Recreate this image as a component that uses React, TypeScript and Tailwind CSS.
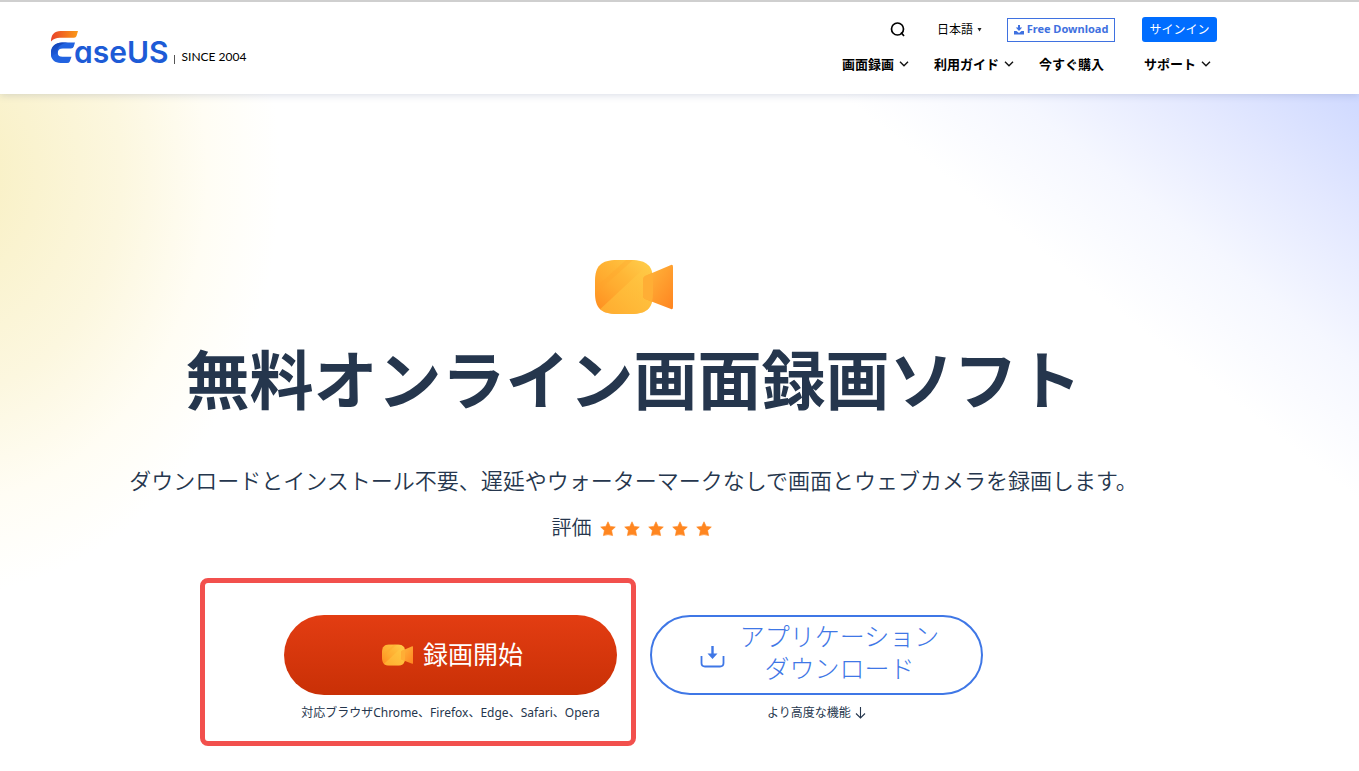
import React from "react";

const navItems = [
  { label: "画面録画", menu: true, width: "w-[92px]" },
  { label: "利用ガイド", menu: true, width: "w-[105px]" },
  { label: "今すぐ購入", menu: false, width: "w-[105px]" },
  { label: "サポート", menu: true, width: "w-[73px]" },
];

function Logo() {
  return (
    <a href="#" aria-label="EaseUS" className="flex items-end text-[#1d5bd6]">
      <svg width="27" height="34" viewBox="0 0 27 34" className="shrink-0" aria-hidden="true">
        <defs>
          <linearGradient id="logoTop" x1="0" y1="0" x2="1" y2="0">
            <stop offset="0" stopColor="#e8432b" />
            <stop offset="1" stopColor="#fb9a17" />
          </linearGradient>
          <linearGradient id="logoBase" x1="0" y1="0" x2="0.4" y2="1">
            <stop offset="0" stopColor="#123fae" />
            <stop offset="1" stopColor="#2263e6" />
          </linearGradient>
        </defs>
        <path d="M0 11.500C0 4.500 3.500 1 9.500 1H27L25.500 6Q25 7.800 23 7.800H9C5 7.800 2.500 9 0 11.500Z" fill="url(#logoTop)" />
        <path d="M0 22.500C1 16 5 12.500 11 12.500H24L22.800 16.500Q22.200 18.600 20 18.600H12C8.500 18.600 6.800 20 6.800 23C6.800 25.800 8.500 26.800 11.500 26.800H20.500L18.800 31.500Q18.200 33 16 33H9.500C3 33-.500 29 0 22.500Z" fill="#2263e0" />
        <path d="M0 23C-.500 17 4 12.500 11 12.500H17C9 14 6 17 6.500 23.500C3 24 1 26 1 28Q0 26 0 23Z" fill="url(#logoBase)" />
      </svg>
      <span className="-ml-1 font-['Inter',sans-serif] text-[30px] leading-6 font-semibold [font-feature-settings:'cv11']">
        aseUS
      </span>
    </a>
  );
}

function Chevron() {
  return (
    <svg width="10" height="6" viewBox="0 0 10 6" fill="none" stroke="#111" strokeWidth="1.4" aria-hidden="true">
      <path d="M1 .8 5 4.800 9 .8" />
    </svg>
  );
}

function Camera({ id, className }: { id: string; className: string }) {
  return (
    <svg viewBox="0 0 78 54" className={className} aria-hidden="true">
      <defs>
        <linearGradient id={id + "body"} x1="0.1" y1="0.9" x2="0.9" y2="0.1">
          <stop offset="0" stopColor="#ff9222" />
          <stop offset="0.4" stopColor="#ffac30" />
          <stop offset="0.62" stopColor="#ffb636" />
          <stop offset="1" stopColor="#ffca48" />
        </linearGradient>
        <linearGradient id={id + "lens"} x1="0" y1="0" x2="1" y2="1">
          <stop offset="0" stopColor="#ffbb3e" />
          <stop offset="1" stopColor="#ff8420" />
        </linearGradient>
        <linearGradient id={id + "shade"} x1="0" y1="1" x2="1" y2="0">
          <stop offset="0" stopColor="#ffbd38" />
          <stop offset="1" stopColor="#ffca46" />
        </linearGradient>
        <clipPath id={id + "clip"}>
          <path d="M22 0H36C52 0 58 6 58 21V33C58 48 52 54 36 54H22C6 54 0 48 0 33V21C0 6 6 0 22 0Z" />
        </clipPath>
      </defs>
      <g clipPath={"url(#" + id + "clip)"}>
        <path d="M0 0H58V54H0Z" fill={"url(#" + id + "body)"} />
        <path d="M0 54 58 0V54Z" fill={"url(#" + id + "shade)"} fillOpacity="0.6" />
        <path d="M0 28 31 0H38L0 34Z" fill="#ffa22c" fillOpacity="0.3" />
      </g>
      <path d="M50 16Q48 17 48 20V36Q48 38 50 39L76 49Q78 50 78 47V7Q78 4 76 5Z" fill={"url(#" + id + "lens)"} />
      <path d="M50 16Q48 17 48 20V36Q48 38 50 39L57 41.500Q58 38 58 33V21Q58 16 57 13Z" fill="#ffae35" />
    </svg>
  );
}

function Star() {
  return (
    <svg width="16" height="16" viewBox="0 0 16 16" aria-hidden="true">
      <path
        d="M8 .8 10.200 5.400 15.300 6 11.600 9.500 12.600 14.600Q8 12.600 3.400 14.600L4.400 9.500.7 6 5.800 5.400Z"
        fill="#ff8620"
        stroke="#ff8620"
        strokeWidth="0.6"
        strokeLinejoin="round"
      />
    </svg>
  );
}

export default function App() {
  return (
    <div className="min-h-screen bg-white font-['Noto_Sans','Noto_Sans_CJK_JP',sans-serif] text-[#25364d]">
      <header className="relative z-10 border-t-2 border-[#cfcfcf] bg-white shadow-[0_1px_8px_rgba(60,80,130,0.2)]">
        <div className="flex h-[92px] justify-between pr-[142px] pl-[51px]">
          <div className="flex items-end self-start pt-[28px]">
            <Logo />
            <span className="ml-[5px] h-[9px] w-px self-end bg-[#555]" />
            <span className="ml-[7px] font-['Lato',sans-serif] text-[12px] leading-[14px] text-black">SINCE 2004</span>
          </div>
          <div className="flex flex-col items-end pt-[15px]">
            <div className="flex items-center">
              <button type="button" aria-label="検索" className="mr-[31px]">
                <svg width="16" height="16" viewBox="0 0 16 16" fill="none" stroke="#000" strokeWidth="1.700" aria-hidden="true">
                  <circle cx="7.500" cy="7" r="6" />
                  <path d="m11 10.500 3 3.500" />
                </svg>
              </button>
              <button type="button" className="mr-[25px] flex items-center gap-1 text-[12px] leading-5 text-black">
                日本語
                <svg width="5" height="4" viewBox="0 0 5 4" aria-hidden="true">
                  <path d="M.5 0H4.500L2.500 3.500Z" fill="#222" />
                </svg>
              </button>
              <a href="#" className="mr-[27px] flex h-6 w-[108px] items-center justify-center gap-[3px] border border-[#3f71e0] text-[11px] font-bold text-[#3f71e0]">
                <svg width="10" height="10" viewBox="0 0 10 10" fill="#3f71e0" aria-hidden="true">
                  <path d="M4 0H6V2.500H8.200L5 6 1.800 2.500H4ZM0 6H2.500L5 8 7.500 6H10V9.500H0Z" />
                </svg>
                Free Download
              </a>
              <a href="#" className="flex h-[25px] w-[75px] items-center justify-center rounded-[3px] bg-[#006dff] text-[12px] leading-5 text-white">
                サインイン
              </a>
            </div>
            <nav className="mt-3 flex">
              {navItems.map((item) => (
                <a key={item.label} href="#" className={"flex shrink-0 items-center gap-[5px] text-[13px] leading-5 font-bold text-black " + item.width}>
                  {item.label}
                  {item.menu && <Chevron />}
                </a>
              ))}
            </nav>
          </div>
        </div>
      </header>

      <main className="bg-[radial-gradient(330px_420px_at_-50px_80px,#f9f1c8_14%,#fcf7df_52%,#fffdf4_78%,transparent_100%),linear-gradient(38deg,transparent_calc(100%-320px),#f5f7ff_calc(100%-215px),#e3e8ff_calc(100%-105px),#cfd9ff_100%)] bg-no-repeat pb-6">
        <div className="flex flex-col items-center pt-[166px] pr-[92px]">
          <Camera id="hero" className="h-[54px] w-[78px]" />
          <h1 className="mt-[18px] text-[64px] leading-[96px] font-bold whitespace-nowrap">無料オンライン画面録画ソフト</h1>
          <p className="mt-9 text-[22px] leading-8 font-[350] whitespace-nowrap">
            ダウンロードとインストール不要、遅延やウォーターマークなしで画面とウェブカメラを録画します。
          </p>
          <div className="mt-4 flex items-center gap-2 pr-1 text-[20px] leading-8 font-[350]">
            評価
            <span className="flex gap-2 pt-0.5" role="img" aria-label="5つ星">
              {[1, 2, 3, 4, 5].map((n) => (
                <Star key={n} />
              ))}
            </span>
          </div>
        </div>

        <div className="mt-[34px] flex items-start pl-[200px]">
          <section className="flex h-[168px] w-[436px] flex-col items-end rounded-lg border-5 border-[#f2504d] pt-8 pr-[14px]">
            <button
              type="button"
              className="flex h-20 w-[333px] items-center justify-center gap-[10px] rounded-full bg-linear-to-b from-[#e33d12] to-[#c93006] pb-0.5 pl-1 text-[25px] leading-8 text-white"
            >
              <Camera id="start" className="mt-0.5 h-[22px] w-[31px]" />
              録画開始
            </button>
            <p className="mt-2 w-[333px] text-center text-[12px] leading-5">対応ブラウザChrome、Firefox、Edge、Safari、Opera</p>
          </section>
          <section className="ml-[14px] flex w-[333px] flex-col items-center pt-[37px]">
            <button
              type="button"
              className="flex h-20 w-full items-center justify-center gap-[15px] rounded-full border-2 border-[#3f77e6] pr-1.5 pb-1.5 pl-3 text-[25px] leading-8 font-light text-[#3f77e6]"
            >
              <svg width="25" height="23" viewBox="0 0 25 23" className="mt-2" aria-hidden="true">
                <path d="M1.500 11V18Q1.500 21.500 5 21.500H20Q23.500 21.500 23.500 18V11" fill="none" stroke="#3f77e6" strokeWidth="1.800" />
                <path d="M11.300 1H13.700V8.500H17.500L12.500 14 7.500 8.500H11.300Z" fill="#3f77e6" />
              </svg>
              <span>
                アプリケーション
                <br />
                ダウンロード
              </span>
            </button>
            <a href="#" className="mt-2 flex items-center gap-1 text-[12px] leading-5">
              より高度な機能
              <svg width="11" height="12" viewBox="0 0 11 12" fill="none" stroke="#25364d" strokeWidth="1.100" aria-hidden="true">
                <path d="M5.500 0V11M1 6.500 5.500 11 10 6.500" />
              </svg>
            </a>
          </section>
        </div>
      </main>
    </div>
  );
}
